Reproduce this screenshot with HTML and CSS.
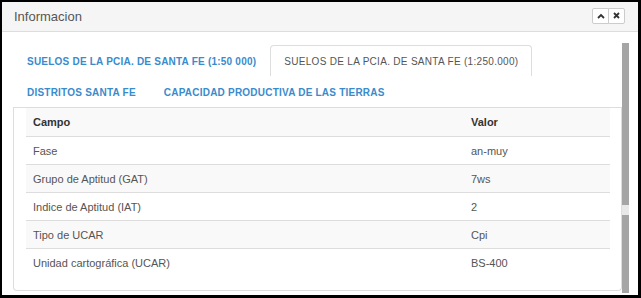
FILE: index.html
```html
<!DOCTYPE html>
<html lang="es">
<head>
<meta charset="utf-8">
<title>Informacion</title>
<link rel="stylesheet" href="styles.css">
</head>
<body>
<div class="window">
  <div class="header">
    <span class="title">Informacion</span>
    <div class="btn-group">
      <button class="hbtn" aria-label="Minimizar">
        <svg width="8" height="6" viewBox="0 0 8 6"><path d="M1 5 L4 2 L7 5" fill="none" stroke="#333" stroke-width="1.8"/></svg>
      </button>
      <button class="hbtn" aria-label="Cerrar">
        <svg width="7" height="7" viewBox="0 0 7 7"><path d="M1 1 L6 6 M6 1 L1 6" fill="none" stroke="#333" stroke-width="1.8"/></svg>
      </button>
    </div>
  </div>
  <div class="body">
    <ul class="tabs">
      <li class="tab">SUELOS DE LA PCIA. DE SANTA FE (1:50 000)</li>
      <li class="tab active">SUELOS DE LA PCIA. DE SANTA FE (1:250.000)</li>
      <li class="tab">DISTRITOS SANTA FE</li>
      <li class="tab">CAPACIDAD PRODUCTIVA DE LAS TIERRAS</li>
    </ul>
    <div class="panel">
      <table class="grid">
        <thead>
          <tr><th class="c1">Campo</th><th>Valor</th></tr>
        </thead>
        <tbody>
          <tr><td>Fase</td><td>an-muy</td></tr>
          <tr class="alt"><td>Grupo de Aptitud (GAT)</td><td>7ws</td></tr>
          <tr><td>Indice de Aptitud (IAT)</td><td>2</td></tr>
          <tr class="alt"><td>Tipo de UCAR</td><td>Cpi</td></tr>
          <tr><td>Unidad cartográfica (UCAR)</td><td>BS-400</td></tr>
        </tbody>
      </table>
    </div>
    <div class="scrollbar"></div>
  </div>
</div>
</body>
</html>
```

FILE: styles.css
```css
html, body {
  margin: 0;
  padding: 0;
  background: #000;
}
body {
  width: 641px;
  height: 298px;
  overflow: hidden;
  font-family: "Liberation Sans", Arial, sans-serif;
}
.window {
  margin: 2px 0 0 2px;
  width: 636px;
  height: 293px;
  background: #fff;
  display: flex;
  flex-direction: column;
}
.header {
  height: 29px;
  flex: none;
  background: #f5f5f5;
  border-bottom: 1px solid #ddd;
  display: flex;
  align-items: center;
  justify-content: space-between;
  padding: 0 13px 0 12px;
}
.title {
  font-size: 13px;
  color: #555;
}
.btn-group {
  display: flex;
  margin-top: -2px;
}
.hbtn {
  width: 17px;
  height: 16px;
  padding: 0;
  margin: 0;
  border: 1px solid #ccc;
  background: #fff;
  display: flex;
  align-items: center;
  justify-content: center;
}
.hbtn:first-child {
  border-radius: 2px 0 0 2px;
}
.hbtn:last-child {
  margin-left: -1px;
  border-radius: 0 2px 2px 0;
}
.body {
  position: relative;
  flex: 1;
  padding: 13px 16px 0 11px;
}
.tabs {
  list-style: none;
  margin: 0;
  padding: 0;
  display: flex;
  flex-wrap: wrap;
  border-bottom: 1px solid #ddd;
}
.tab {
  height: 31px;
  box-sizing: border-box;
  padding: 0 13px;
  border: 1px solid transparent;
  border-bottom: none;
  display: flex;
  align-items: center;
  font-size: 10px;
  letter-spacing: 0.22px;
  font-weight: bold;
  color: #3a8bcc;
  white-space: nowrap;
}
.tab.active {
  border-color: #ddd;
  border-radius: 4px 4px 0 0;
  font-weight: normal;
  letter-spacing: 0.3px;
  color: #555;
}
.panel {
  border: 1px solid #ddd;
  border-top: none;
  border-radius: 0 0 4px 4px;
  padding: 0 11px 14px 12px;
}
.grid {
  width: 100%;
  border-collapse: separate;
  border-spacing: 0;
  font-size: 11px;
  color: #555;
}
.grid th {
  height: 28px;
  padding: 0 0 0 7px;
  text-align: left;
  color: #333;
  background: #f9f9f9;
}
.grid th.c1 {
  width: 431px;
}
.grid td {
  height: 27px;
  padding: 0 0 0 7px;
  border-top: 1px solid #ddd;
}
.grid tr.alt td {
  background: #f9f9f9;
}
.scrollbar {
  position: absolute;
  top: 11px;
  right: 9px;
  bottom: 2px;
  width: 7px;
  background: linear-gradient(#a5a5a5 0, #a5a5a5 162px, #e8e8e8 162px, #e8e8e8 172px, #a5a5a5 172px);
}
```
